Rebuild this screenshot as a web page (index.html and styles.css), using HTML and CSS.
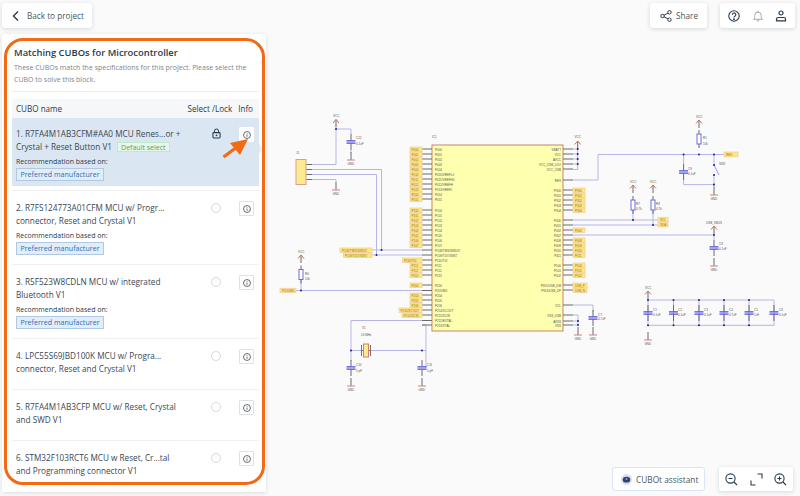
FILE: index.html
```html
<!DOCTYPE html>
<html lang="en">
<head>
<meta charset="utf-8">
<title>Matching CUBOs</title>
<link rel="stylesheet" href="styles.css">
</head>
<body>
<svg class="schematic" width="800" height="496" viewBox="0 0 800 496" xmlns="http://www.w3.org/2000/svg">
  <defs>
    <g id="vcc"><path class="pin" d="M0 0V8"/><path class="arrow" d="M-3 3.5L0 0L3 3.5"/></g>
    <g id="gnd"><path class="pin" d="M0 -8V0"/><path class="gndbar" d="M-4 0H4"/></g>
    <g id="cap"><path class="pin" d="M0 -8V-1.5M0 1.5V8"/><path class="capbar" d="M-4.5 -1.2H4.5M-4.5 1.2H4.5"/></g>
    <g id="res"><path class="pin" d="M0 -9V-5M0 5V9"/><rect class="resbody" x="-2" y="-5" width="4" height="10"/></g>
    <rect id="lab" class="label" x="410" y="-2" width="12" height="4.4"/>
    <rect id="labr" class="label" x="573" y="-2" width="12" height="4.4"/>
    <circle id="n" class="node" r="1"/>
  </defs>

  <!-- wires -->
  <path class="wire" d="M306 164.5H336V129H351V134M351 150V153M306 169.5H381.500V250M306 174.500H376.500V255M306 179.500H336V182M340 250H422M343 255H422M296 290.500H422M351 320.500H422M351 320.500V361M422 325H426V368M351 350.500H361M371 350.500H426M577.700 149V169.500H573M573 149H577.700M573 154H577.700M573 159H577.700M573 164H577.700M573 180H598V154.500H724M573 220H658M573 225H658M573 235H714V240M683.600 154.500V164M683.600 180V184.600H714V187M714 154.500V165M714 175V187M633 210V220M653 210V225M573 305H593V312M573 315H578V325M573 321H578M573 325H578M648 300H774V325.300H648V300M673.500 300V325.300M699 300V325.300M724 300V325.300M749 300V325.300M301 280V290.500"/>
  <path class="switch" d="M714 165L719 175"/>

  <!-- chip -->
  <rect class="chip" x="432" y="145" width="131" height="186"/>

  <!-- pin stubs -->
  <path class="pin" d="M422 149H432M422 154H432M422 159H432M422 164H432M422 169H432M422 174H432M422 179H432M422 184H432M422 189H432M422 194H432M422 199H432M422 210H432M422 215H432M422 220H432M422 225H432M422 230H432M422 235H432M422 240H432M422 245H432M422 250H432M422 255H432M422 260H432M422 265H432M422 270H432M422 275H432M422 285H432M422 290.500H432M422 295H432M422 300H432M422 305H432M422 310H432M422 315H432M422 320.500H432M422 325H432M563 149H573M563 154H573M563 159H573M563 164H573M563 169H573M563 180H573M563 190H573M563 195H573M563 200H573M563 205H573M563 210H573M563 220H573M563 225H573M563 230H573M563 235H573M563 240H573M563 245H573M563 250H573M563 255H573M563 265H573M563 270H573M563 275H573M563 285H573M563 290H573M563 305H573M563 315H573M563 321H573M563 325H573M306 164.500H312M306 169.500H312M306 174.500H312M306 179.500H312M361 350.500H363M369 350.500H371"/>

  <!-- connector -->
  <rect class="conn" x="296" y="159.500" width="10" height="25"/>

  <!-- net labels left -->
  <use href="#lab" y="149"/><use href="#lab" y="154"/><use href="#lab" y="159"/><use href="#lab" y="164"/><use href="#lab" y="169"/><use href="#lab" y="174"/><use href="#lab" y="179"/><use href="#lab" y="184"/><use href="#lab" y="189"/><use href="#lab" y="194"/><use href="#lab" y="199"/>
  <use href="#lab" y="210"/><use href="#lab" y="215"/><use href="#lab" y="220"/><use href="#lab" y="225"/><use href="#lab" y="230"/><use href="#lab" y="235"/><use href="#lab" y="240"/><use href="#lab" y="245"/>
  <use href="#lab" y="265"/><use href="#lab" y="270"/><use href="#lab" y="275"/><use href="#lab" y="285"/><use href="#lab" y="295"/><use href="#lab" y="300"/><use href="#lab" y="305"/>
  <rect class="label" x="340" y="248" width="32" height="4.400"/>
  <rect class="label" x="343.500" y="253" width="28.500" height="4.400"/>
  <rect class="label" x="402.500" y="258" width="19.500" height="4.400"/>
  <rect class="label" x="399" y="308" width="23" height="4.400"/>
  <rect class="label" x="402" y="313" width="20" height="4.400"/>
  <rect class="label" x="280" y="288.300" width="16" height="4.400"/>

  <!-- net labels right -->
  <use href="#labr" y="190"/><use href="#labr" y="195"/><use href="#labr" y="200"/><use href="#labr" y="205"/><use href="#labr" y="210"/><use href="#labr" y="230"/><use href="#labr" y="240"/><use href="#labr" y="245"/><use href="#labr" y="250"/><use href="#labr" y="255"/><use href="#labr" y="265"/><use href="#labr" y="270"/><use href="#labr" y="275"/>
  <rect class="label" x="573" y="283" width="14" height="4.400"/>
  <rect class="label" x="573" y="288" width="14" height="4.400"/>
  <rect class="label" x="658" y="217.300" width="10" height="4.400"/>
  <rect class="label" x="658" y="222.500" width="10" height="4.400"/>
  <rect class="label" x="724" y="152" width="14" height="4.800"/>

  <!-- parts -->
  <use href="#vcc" x="336" y="119.500"/><use href="#vcc" x="577.700" y="141"/><use href="#vcc" x="699" y="120"/><use href="#vcc" x="633" y="185"/><use href="#vcc" x="653" y="185"/><use href="#vcc" x="714" y="226"/><use href="#vcc" x="648" y="291"/><use href="#vcc" x="301" y="255"/>
  <use href="#cap" x="351" y="142"/><use href="#cap" x="683.600" y="172"/><use href="#cap" x="714" y="248"/><use href="#cap" x="593" y="318"/><use href="#cap" x="351" y="368"/><use href="#cap" x="422" y="368"/>
  <use href="#cap" x="648" y="313"/><use href="#cap" x="673.500" y="313"/><use href="#cap" x="699" y="313"/><use href="#cap" x="724" y="313"/><use href="#cap" x="749" y="313"/><use href="#cap" x="774" y="313"/>
  <use href="#res" x="699" y="139"/><use href="#res" x="633" y="205"/><use href="#res" x="653" y="205"/><use href="#res" x="301" y="274.500"/>
  <use href="#gnd" x="351" y="160"/><use href="#gnd" x="336" y="190"/><use href="#gnd" x="714" y="195"/><use href="#gnd" x="714" y="266"/><use href="#gnd" x="578" y="335"/><use href="#gnd" x="593" y="335"/><use href="#gnd" x="648" y="340"/><use href="#gnd" x="351" y="386"/><use href="#gnd" x="422" y="386"/>
  <rect class="xtal" x="363.500" y="344" width="5" height="13"/>
  <path class="capbar-thin" d="M361.500 345V356M370.500 345V356"/>

  <!-- nodes -->
  <use href="#n" x="336" y="129"/><use href="#n" x="381.500" y="250"/><use href="#n" x="376.500" y="255"/><use href="#n" x="301" y="290.500"/><use href="#n" x="351" y="350.500"/><use href="#n" x="422" y="350.500"/><use href="#n" x="577.700" y="149"/><use href="#n" x="577.700" y="154"/><use href="#n" x="577.700" y="159"/><use href="#n" x="577.700" y="164"/><use href="#n" x="683.600" y="154.500"/><use href="#n" x="699" y="154.500"/><use href="#n" x="714" y="154.500"/><use href="#n" x="714" y="165"/><use href="#n" x="714" y="175"/><use href="#n" x="714" y="184.600"/><use href="#n" x="633" y="220"/><use href="#n" x="653" y="225"/><use href="#n" x="714" y="235"/><use href="#n" x="578" y="321"/><use href="#n" x="578" y="325"/>
  <use href="#n" x="648" y="300"/><use href="#n" x="673.500" y="300"/><use href="#n" x="699" y="300"/><use href="#n" x="724" y="300"/><use href="#n" x="749" y="300"/><use href="#n" x="648" y="325.300"/><use href="#n" x="673.500" y="325.300"/><use href="#n" x="699" y="325.300"/><use href="#n" x="724" y="325.300"/><use href="#n" x="749" y="325.300"/>

  <!-- reference texts -->
  <g class="stext">
    <text x="333" y="117">VCC</text><text x="574.500" y="138">VCC</text><text x="696" y="118">VCC</text><text x="630" y="183">VCC</text><text x="650" y="183">VCC</text><text x="706" y="224">USB_VBUS</text><text x="645" y="289">VCC</text><text x="298" y="253">VCC</text>
    <text x="432" y="138">IC1</text><text x="296" y="154">J1</text><text x="356" y="139">C12</text><text x="356" y="145">0.1uF</text>
    <text x="703" y="139">R1</text><text x="703" y="145">10k</text><text x="688" y="170">C9</text><text x="688" y="175">0.1uF</text><text x="719" y="165">SW1</text>
    <text x="636" y="205">R7</text><text x="636" y="210">4.7k</text><text x="656" y="205">R8</text><text x="656" y="210">4.7k</text>
    <text x="719" y="245">C8</text><text x="719" y="250">0.1uF</text><text x="305" y="275">R6</text><text x="305" y="280">10k</text>
    <text x="362" y="329">X1</text><text x="361" y="336">16 MHz</text><text x="356" y="366">C10</text><text x="356" y="372">5 pF</text><text x="427" y="366">C11</text><text x="427" y="372">5 pF</text>
    <text x="598" y="316">C7</text><text x="598" y="320">4.7uF</text>
    <text x="653" y="311">C1</text><text x="653" y="316">0.1uF</text><text x="678" y="311">C2</text><text x="678" y="316">0.1uF</text><text x="704" y="311">C3</text><text x="704" y="316">0.1uF</text><text x="729" y="311">C4</text><text x="729" y="316">4.7uF</text><text x="754" y="311">C5</text><text x="754" y="316">1uF</text><text x="779" y="311">C6</text><text x="779" y="316">0.1uF</text>
    <text x="347.500" y="165">GND</text><text x="332.500" y="195">GND</text><text x="710.500" y="200">GND</text><text x="710.500" y="271">GND</text><text x="574.500" y="340">GND</text><text x="589.500" y="340">GND</text><text x="644.500" y="345">GND</text><text x="347.500" y="391">GND</text><text x="418.500" y="391">GND</text>
    <text x="435" y="150.500">P000</text><text x="435" y="155.500">P001</text><text x="435" y="160.500">P002</text><text x="435" y="165.500">P003</text><text x="435" y="170.500">P004</text><text x="435" y="175.500">P010/VREFL0</text><text x="435" y="180.500">P011/VREFH0</text><text x="435" y="185.500">P012/VREFH</text><text x="435" y="190.500">P013/VREFL</text><text x="435" y="195.500">P014</text><text x="435" y="200.500">P015</text>
    <text x="435" y="211.500">P100</text><text x="435" y="216.500">P101</text><text x="435" y="221.500">P102</text><text x="435" y="226.500">P103</text><text x="435" y="231.500">P104</text><text x="435" y="236.500">P105</text><text x="435" y="241.500">P106</text><text x="435" y="246.500">P107</text>
    <text x="435" y="251.500">P108/TMS/SWDIO</text><text x="435" y="256.500">P109/TDO/SWO</text><text x="435" y="261.500">P110/TDI</text><text x="435" y="266.500">P111</text><text x="435" y="271.500">P112</text><text x="435" y="276.500">P113</text><text x="435" y="286.500">P200</text><text x="435" y="292">P201/MD</text><text x="435" y="296.500">P204</text><text x="435" y="301.500">P205</text><text x="435" y="306.500">P206</text><text x="435" y="311.500">P214/XCOUT</text><text x="435" y="316.500">P215/XCIN</text><text x="435" y="322">P212/EXTAL</text><text x="435" y="326.500">P213/XTAL</text>
    <text class="end" x="561" y="150.500">VBATT</text><text class="end" x="561" y="155.500">VCC</text><text class="end" x="561" y="160.500">AVCC</text><text class="end" x="561" y="165.500">VCC_USB_LDO</text><text class="end" x="561" y="170.500">VCC_USB</text><text class="end" x="561" y="181.500">RES</text><text class="end" x="561" y="191.500">P300</text><text class="end" x="561" y="196.500">P301</text><text class="end" x="561" y="201.500">P302</text><text class="end" x="561" y="206.500">P303</text><text class="end" x="561" y="211.500">P304</text><text class="end" x="561" y="221.500">P400</text><text class="end" x="561" y="226.500">P401</text><text class="end" x="561" y="231.500">P402</text><text class="end" x="561" y="236.500">P407</text><text class="end" x="561" y="241.500">P408</text><text class="end" x="561" y="246.500">P409</text><text class="end" x="561" y="251.500">P410</text><text class="end" x="561" y="256.500">P411</text><text class="end" x="561" y="266.500">P500</text><text class="end" x="561" y="271.500">P501</text><text class="end" x="561" y="276.500">P502</text><text class="end" x="561" y="286.500">P915/USB_DM</text><text class="end" x="561" y="291.500">P914/USB_DP</text><text class="end" x="561" y="306.500">VCL</text><text class="end" x="561" y="316.500">VSS_USB</text><text class="end" x="561" y="322.500">AVSS</text><text class="end" x="561" y="326.500">VSS</text>
  </g>
  <g class="ltext">
    <text x="411.500" y="150.500">P000</text><text x="411.500" y="155.500">P001</text><text x="411.500" y="160.500">P002</text><text x="411.500" y="165.500">P003</text><text x="411.500" y="170.500">P004</text><text x="411.500" y="175.500">P010</text><text x="411.500" y="180.500">P011</text><text x="411.500" y="185.500">P012</text><text x="411.500" y="190.500">P013</text><text x="411.500" y="195.500">P014</text><text x="411.500" y="200.500">P015</text>
    <text x="411.500" y="211.500">P100</text><text x="411.500" y="216.500">P101</text><text x="411.500" y="221.500">P102</text><text x="411.500" y="226.500">P103</text><text x="411.500" y="231.500">P104</text><text x="411.500" y="236.500">P105</text><text x="411.500" y="241.500">P106</text><text x="411.500" y="246.500">P107</text>
    <text x="342" y="251.500">P108/TMS/SWDIO</text><text x="345" y="256.500">P109/TDO/SWO</text><text x="404" y="261.500">P110/TDI</text><text x="411.500" y="266.500">P111</text><text x="411.500" y="271.500">P112</text><text x="411.500" y="276.500">P113</text><text x="411.500" y="286.500">P200</text><text x="411.500" y="296.500">P204</text><text x="411.500" y="301.500">P205</text><text x="411.500" y="306.500">P206</text><text x="400.500" y="311.500">P214/XCOUT</text><text x="403.500" y="316.500">P215/XCIN</text><text x="282" y="291.800">P201/MD</text>
    <text x="575" y="191.500">P300</text><text x="575" y="196.500">P301</text><text x="575" y="201.500">P302</text><text x="575" y="206.500">P303</text><text x="575" y="211.500">P304</text><text x="575" y="231.500">P402</text><text x="575" y="241.500">P408</text><text x="575" y="246.500">P409</text><text x="575" y="251.500">P410</text><text x="575" y="256.500">P411</text><text x="575" y="266.500">P500</text><text x="575" y="271.500">P501</text><text x="575" y="276.500">P502</text><text x="575" y="286.500">USB_P</text><text x="575" y="291.500">USB_N</text><text x="660" y="220.800">SCL</text><text x="660" y="226">SDA</text><text x="726" y="155.800">RES</text>
  </g>
</svg>

<div class="page">
  <aside class="side">
    <button class="card back" type="button">
      <svg class="ico" width="12" height="12" viewBox="0 0 12 12"><path d="M8 1.500L3.500 6L8 10.500" fill="none" stroke="#2b3a4a" stroke-width="1.400"/></svg>
      Back to project
    </button>
    <section class="panel">
      <h1 class="title">Matching CUBOs for Microcontroller</h1>
      <p class="desc">These CUBOs match the specifications for this project. Please select the<br>CUBO to solve this block.</p>
      <div class="thead">
        <span class="th-name">CUBO name</span>
        <span class="th-sel">Select /Lock</span>
        <span class="th-info">Info</span>
      </div>

      <div class="row row-sel">
        <div class="row-body">
          <div>
            <div class="name">1. R7FA4M1AB3CFM#AA0 MCU Renes...or +<br>Crystal + Reset Button V1 <span class="default">Default select</span></div>
            <div class="rec">Recommendation based on:</div>
            <span class="pref">Preferred manufacturer</span>
          </div>
          <svg class="lock" width="9" height="11" viewBox="0 0 10 12"><path d="M2.700 5V3.300a2.300 2.300 0 0 1 4.600 0V5" fill="none" stroke="#2b3a4a" stroke-width="1.100"/><rect x="1" y="5" width="8" height="6" rx="1" fill="none" stroke="#2b3a4a" stroke-width="1.200"/><circle cx="5" cy="8" r="1" fill="#2b3a4a"/></svg>
          <span class="infobtn infobtn-sel"><svg width="8" height="8" viewBox="0 0 9 9"><use href="#infoicon"/></svg></span>
        </div>
      </div>

      <div class="row">
        <div class="row-body">
          <div>
            <div class="name">2. R7FS124773A01CFM MCU w/ Progr...<br>connector, Reset and Crystal V1</div>
            <div class="rec">Recommendation based on:</div>
            <span class="pref">Preferred manufacturer</span>
          </div>
          <span class="radio"></span>
          <span class="infobtn"><svg width="8" height="8" viewBox="0 0 9 9"><use href="#infoicon"/></svg></span>
        </div>
      </div>

      <div class="row">
        <div class="row-body">
          <div>
            <div class="name">3. R5F523W8CDLN MCU w/ integrated<br>Bluetooth V1</div>
            <div class="rec">Recommendation based on:</div>
            <span class="pref">Preferred manufacturer</span>
          </div>
          <span class="radio"></span>
          <span class="infobtn"><svg width="8" height="8" viewBox="0 0 9 9"><use href="#infoicon"/></svg></span>
        </div>
      </div>

      <div class="row">
        <div class="row-body">
          <div class="name name-only">4. LPC55S69JBD100K MCU w/ Progra...<br>connector, Reset and Crystal V1</div>
          <span class="radio"></span>
          <span class="infobtn"><svg width="8" height="8" viewBox="0 0 9 9"><use href="#infoicon"/></svg></span>
        </div>
      </div>

      <div class="row">
        <div class="row-body">
          <div class="name name-only">5. R7FA4M1AB3CFP MCU w/ Reset, Crystal<br>and SWD V1</div>
          <span class="radio"></span>
          <span class="infobtn"><svg width="8" height="8" viewBox="0 0 9 9"><use href="#infoicon"/></svg></span>
        </div>
      </div>

      <div class="row row-last">
        <div class="row-body">
          <div class="name">6. STM32F103RCT6 MCU w Reset, Cr...tal<br>and Programming connector V1</div>
          <span class="radio"></span>
          <span class="infobtn"><svg width="8" height="8" viewBox="0 0 9 9"><use href="#infoicon"/></svg></span>
        </div>
      </div>
    </section>
  </aside>

  <main class="main">
    <div class="topbar">
      <button class="card share" type="button">
        <svg width="12" height="12" viewBox="0 0 12 12" fill="none" stroke="#2b3a4a" stroke-width="1"><circle cx="2.500" cy="6" r="1.700"/><circle cx="9.500" cy="2.300" r="1.700"/><circle cx="9.500" cy="9.700" r="1.700"/><path d="M4 5.200L8 3.100M4 6.800L8 8.900"/></svg>
        Share
      </button>
      <div class="card tools">
        <svg width="12" height="12" viewBox="0 0 12 12" fill="none" stroke="#2b3a4a" stroke-width="1.100"><circle cx="6" cy="6" r="5.200"/><path d="M4.300 4.700a1.750 1.750 0 1 1 2.600 1.500c-.6.300-.9.600-.9 1.300"/><circle cx="6" cy="9.200" r=".4" fill="#2b3a4a"/></svg>
        <svg width="12" height="12" viewBox="0 0 12 12" fill="none" stroke="#a2a7ad" stroke-width="1"><path d="M1.500 9.300c1-.9 1.300-1.900 1.300-4a3.200 3.200 0 0 1 6.400 0c0 2.100.3 3.100 1.300 4zM4.800 10.800h2.400M6 .6v1.500"/></svg>
        <svg width="12" height="12" viewBox="0 0 12 12" fill="none" stroke="#2b3a4a" stroke-width="1.200"><circle cx="6" cy="3" r="2"/><path d="M1.500 10.800V9.300c0-1 .8-1.800 1.800-1.800h5.400c1 0 1.800.8 1.800 1.800v1.500z"/></svg>
      </div>
    </div>
    <div class="bottombar">
      <button class="assistant" type="button">
        <svg width="11" height="11" viewBox="0 0 11 11"><circle cx="5.500" cy="5.500" r="5.500" fill="#dcdcf8"/><ellipse cx="5.500" cy="5.700" rx="3.800" ry="2.900" fill="#2f4468"/><circle cx="5.500" cy="5" r="1" fill="#8ea4d8"/></svg>
        CUBOt assistant
      </button>
      <div class="card tools zoomtools">
        <svg width="13" height="13" viewBox="0 0 13 13" fill="none" stroke="#2b3a4a" stroke-width="1.100"><circle cx="5.500" cy="5.500" r="4.600"/><path d="M3.500 5.500H7.500M9 9L12 12"/></svg>
        <svg width="13" height="13" viewBox="0 0 13 13" fill="none" stroke="#2b3a4a" stroke-width="1.100"><path d="M1 7.500V12H5.500M7.500 1H12V5.500"/></svg>
        <svg width="13" height="13" viewBox="0 0 13 13" fill="none" stroke="#2b3a4a" stroke-width="1.100"><circle cx="5.500" cy="5.500" r="4.600"/><path d="M3.500 5.500H7.500M5.500 3.500V7.500M9 9L12 12"/></svg>
      </div>
    </div>
  </main>
</div>

<div class="highlight"></div>
<svg class="callout" width="34" height="26" viewBox="0 0 34 26"><path d="M1.500 20L15 10" stroke="#f26a13" stroke-width="3.200" fill="none"/><path d="M26 2L8 6L18 18z" fill="#f26a13"/></svg>
<svg class="defs-only" width="0" height="0"><defs><g id="infoicon" fill="none" stroke="#3d4955" stroke-width=".9"><circle cx="4.500" cy="4.500" r="3.900"/><path d="M4.500 4V6.500M4.500 2.400V3.100"/></g></defs></svg>
</body>
</html>
```

FILE: styles.css
```css
* { box-sizing: border-box; }
html, body { margin: 0; padding: 0; }
body {
  width: 800px;
  height: 496px;
  overflow: hidden;
  position: relative;
  background: #fafafa;
  font-family: "Open Sans", "Noto Sans", sans-serif;
  color: #2b3a4a;
}
button { font: inherit; color: inherit; border: 0; cursor: pointer; }

.schematic { position: absolute; left: 0; top: 0; }
.wire { fill: none; stroke: #b6b6e6; stroke-width: 1; }
.switch { fill: none; stroke: #9a9adf; stroke-width: 1; }
.pin { fill: none; stroke: #6a6a6a; stroke-width: 1; }
.chip { fill: #ffffb0; stroke: #c9846e; stroke-width: 1; }
.conn { fill: #ffe98f; stroke: #d9a284; stroke-width: 1; }
.label { fill: #ffe87a; stroke: #f1cfa4; stroke-width: .8; }
.arrow { fill: none; stroke: #c9705e; stroke-width: 1; }
.gndbar { fill: none; stroke: #c9847a; stroke-width: 1; }
.capbar { fill: none; stroke: #4a4ae0; stroke-width: 1.200; }
.capbar-thin { fill: none; stroke: #8a6a6a; stroke-width: 1; }
.resbody { fill: #fff; stroke: #6a6ae0; stroke-width: 1; }
.xtal { fill: #ffe98f; stroke: #c9846e; stroke-width: 1; }
.node { fill: #1c1c9c; }
.stext text { font: 3px "Liberation Sans", sans-serif; fill: #555; }
.stext .end { text-anchor: end; }
.ltext text { font: 3px "Liberation Sans", sans-serif; fill: #a06a2a; }

.page { position: relative; display: flex; height: 496px; }
.side { width: 266px; padding: 3px 0 0 2px; flex: none; display: flex; flex-direction: column; }
.card {
  background: #fff;
  border-radius: 3px;
  box-shadow: 0 1px 4px rgba(30, 40, 60, .16);
}
.back {
  width: 90px;
  height: 25px;
  display: flex;
  align-items: center;
  gap: 5px;
  padding: 0 0 0 8px;
  font-size: 8.200px;
  color: #4a5662;
}
.panel {
  margin-top: 6px;
  width: 264px;
  height: 458px;
  overflow: hidden;
  background: #fff;
  padding: 0 7px 0 10px;
  box-shadow: 0 1px 4px rgba(30, 40, 60, .14);
  border-radius: 2px;
}
.title {
  margin: 12px 0 0;
  padding: 0 0 0 2px;
  font-size: 9.400px;
  line-height: 14px;
  font-weight: 600;
  color: #2b3a4a;
}
.desc {
  margin: 2px 0 0;
  padding: 0 0 0 2px;
  height: 30px;
  font-size: 7px;
  line-height: 11.800px;
  white-space: nowrap;
  color: #7d858d;
  border-bottom: 1px solid #eceef0;
}
.thead {
  margin-top: 7px;
  height: 19px;
  display: flex;
  align-items: center;
  background: #f6f7f9;
  padding: 0 6px 0 4px;
  font-size: 8.100px;
  color: #2b3a4a;
}
.th-name { flex: 1; }
.th-info { margin-left: 6px; }

.row { border-bottom: 1px solid #eef0f2; }
.row-sel { position: relative; padding-bottom: 4px; }
.row-sel::after {
  content: "";
  position: absolute;
  right: -3px;
  top: 25px;
  border-left: 3px solid #e6ebf2;
  border-top: 6px solid transparent;
  border-bottom: 6px solid transparent;
}
.row-last { border-bottom: 0; }
.row-body {
  display: grid;
  grid-template-columns: 1fr 10px 15px;
  column-gap: 18px;
  align-items: start;
  padding: 10px 5px 9px 4px;
}
.row-sel .row-body { background: #dbe6f3; padding: 9px 5px 5px 4px; }
.name { font-size: 8.200px; line-height: 13px; color: #3a4652; white-space: nowrap; }
.name-only { height: 31px; }
.default {
  display: inline-block;
  margin-left: 3px;
  height: 10px;
  padding: 0 3px;
  line-height: 9px;
  font-size: 7px;
  color: #45a861;
  background: #e9f6ec;
  border: 1px solid #c4e6cc;
  vertical-align: 0;
}
.rec { margin-top: 3px; font-size: 7px; line-height: 12px; color: #2b3a4a; }
.pref {
  display: block;
  width: 88px;
  height: 13px;
  line-height: 11px;
  text-align: center;
  font-size: 7.100px;
  white-space: nowrap;
  color: #2d6db5;
  background: #e3edf8;
  border: 1px solid #afc8e4;
}
.radio {
  margin-top: 2px;
  width: 10px;
  height: 10px;
  border-radius: 50%;
  border: 1px solid #d5d8dc;
  background: #fff;
}
.lock { margin: 1px 0 0 1px; }
.infobtn {
  width: 15px;
  height: 15px;
  display: flex;
  align-items: center;
  justify-content: center;
  background: #fff;
  border: 1px solid #dfe2e5;
  border-radius: 1px;
}
.infobtn-sel { border-color: #fff; }

.main {
  flex: 1;
  display: flex;
  flex-direction: column;
  justify-content: space-between;
  padding: 3px 5px 5px 0;
}
.topbar, .bottombar { display: flex; justify-content: flex-end; }
.topbar { gap: 13px; }
.bottombar { gap: 14px; padding-right: 2px; }
.share {
  width: 57px;
  height: 25px;
  display: flex;
  align-items: center;
  gap: 4px;
  padding: 0 0 0 10px;
  font-size: 8.200px;
  color: #4a5662;
}
.tools {
  width: 75px;
  height: 25px;
  display: flex;
  align-items: center;
  justify-content: space-between;
  padding: 0 8px;
}
.zoomtools { width: 74px; height: 24px; padding: 0 6px; }
.assistant {
  width: 93px;
  height: 24px;
  display: flex;
  align-items: center;
  gap: 4px;
  padding: 0 0 0 8px;
  font-size: 8.300px;
  color: #4a5662;
  background: #fff;
  border-radius: 3px;
  border: 1px solid #d8e4fa;
}

.highlight {
  position: absolute;
  left: 4px;
  top: 38px;
  width: 261px;
  height: 447px;
  border: 3px solid #f26a13;
  border-radius: 19px;
}
.callout { position: absolute; left: 222px; top: 137px; }
.defs-only { position: absolute; }
```
